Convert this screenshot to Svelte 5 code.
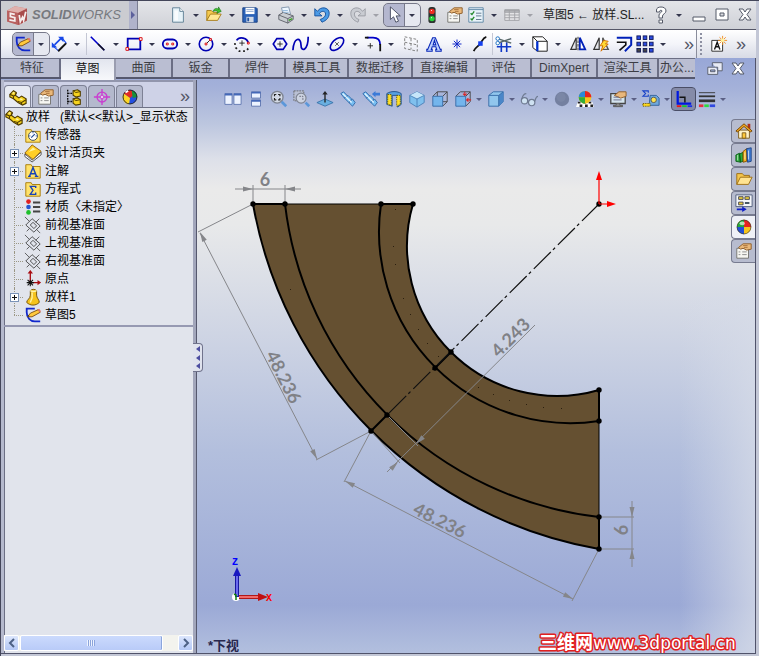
<script>
  const ICONS = {
    logo: `<path d="M1 6L8 2l11 2v11l-7 4-11-3z" fill="#c97b78"/><path d="M1 6l10 2v11L1 16z" fill="#b8605f"/><path d="M11 8l8-4v11l-8 4z" fill="#a84c4c"/><path d="M1 6l7-4 11 2-8 4z" fill="#e0b1ad"/><path d="M8 9.500l-4-1v3l4 1v3l-5-1M12 10l1 6 2-4 1 3 2-8" fill="none" stroke="#f6eeee" stroke-width="1.600"/>`,
    new: `<path d="M4 2h8l4 4v12H4z" fill="#e6f2f8" stroke="#5b7d92"/><path d="M12 2v4h4" fill="#fff" stroke="#5b7d92"/><path d="M6 5h4v11H6z" fill="#fff" opacity=".7"/>`,
    open: `<path d="M2 16V5h5l2 2h5v3H6z" fill="#f5c94e" stroke="#a67a18"/><path d="M2 16l4-7h12l-4 7z" fill="#ffe793" stroke="#a67a18"/><path d="M9 6c1-4 5-4 6-2V1l3 5-5 2 1-2c-1-1-3-1-5 0z" fill="#3ec22f" stroke="#187a14" stroke-width=".7"/>`,
    save: `<path d="M2 2h15l1 1v15H2z" fill="#2a62b8" stroke="#173e80"/><path d="M5 2h10v7H5z" fill="#fff"/><path d="M6 4h8M6 6h8" stroke="#8aa5cf"/><path d="M6 12h8v6H6z" fill="#cfd8e6"/><path d="M7 13h2v4H7z" fill="#24539c"/>`,
    print: `<path d="M5 2l8-1 2 8-8 1z" fill="#eef7ff" stroke="#7f93aa"/><path d="M2 10l5-3 11 4v4l-6 4-10-4z" fill="#c9cdd2" stroke="#5c6068"/><path d="M2 10l10 4v5M12 14l6-3" fill="none" stroke="#5c6068"/><path d="M6 5h6M7 7h6" stroke="#8fb5da"/><path d="M13 16l4-2" stroke="#37a020" stroke-width="1.500"/>`,
    undo: `<path d="M2 3v8h8L7 8.500C9 5 14 5 14 9c0 3-3 5-6 6l2 3c5-2 8-5 8-10C18 1 8 0 5 6z" fill="#4b9be6" stroke="#14509c"/>`,
    redo: `<path d="M18 3v8h-8l3-2.500C11 5 6 5 6 9c0 3 2 5 5 6l-1 3C5 16 2 13 2 8 2 1 12 0 15 6z" fill="#c9ccd2" stroke="#989ba3"/>`,
    select: `<path d="M6 1v14l3.500-3 2.500 6 3-1.200-2.600-5.800H17z" fill="#fff" stroke="#454b5e"/>`,
    traffic: `<rect x="6" y="1" width="8" height="18" rx="3" fill="#2e3330"/><circle cx="10" cy="6" r="3" fill="#f02c22"/><circle cx="10" cy="14" r="3" fill="#25d43a"/><path d="M9 5h1M9 13h1" stroke="#fff"/>`,
    props: `<path d="M2 7h13v11H2z" fill="#f6f6f2" stroke="#70706c"/><path d="M4 11h2M8 11h5M4 14h2M8 14h5" stroke="#888"/><path d="M4 6l5-4h9v6l-5 1-4-2-3 1z" fill="#e9b87a" stroke="#8c5a26"/><path d="M9 4h5M10 6h4" stroke="#a9713a"/>`,
    options: `<path d="M2 2h16v16H2z" fill="#e9f3fa" stroke="#5a84a4"/><path d="M2 4h16" stroke="#5a84a4"/><path d="M4 8l1.500 1.500L8 6M4 14l1.500 1.500L8 12" fill="none" stroke="#258a2e" stroke-width="1.500"/><path d="M10 8h6M10 11h6M10 15h6" stroke="#587288"/>`,
    table: `<path d="M2 4h16v12H2z" fill="#e4e4e6" stroke="#a0a1a6"/><path d="M2 5h16v2H2zM2 10h16M2 13h16M7 5v11M13 5v11" fill="#b5b6ba" stroke="#a0a1a6"/>`,
    help: `<path d="M5.500 7V5c0-2 2-3 4.500-3s5 1 5 4c0 2.500-3.500 3-3.500 5v2H8V10c0-2 3-2.500 3-4 0-1-2-1-2.300 0V7zM8 15h3.500v3H8z" fill="#fff" stroke="#555a68"/>`,
    min: `<path d="M4 12h12v4H4z" fill="#fff" stroke="#555a68"/>`,
    max: `<path d="M4 4h12v11H4zM8 8h4v3H8z" fill="#fff" fill-rule="evenodd" stroke="#555a68"/>`,
    close: `<path d="M4 4h4l2 3 2-3h4l-4 5.500L16 15h-4l-2-3-2 3H4l4-5.500z" fill="#fff" stroke="#555a68"/>`,
    restore: `<path d="M7 3h11v9h-5M7 3v4M2 8h11v8H2zM5 11h5v2H5z" fill="#e8ebf5" fill-rule="evenodd" stroke="#555a68"/>`,
    sketch: `<path d="M12 3H3v4c0 6 4 10 9 10h6" fill="none" stroke="#1128cc" stroke-width="2"/><path d="M4 12l3-4 9-4 2 3-9 5z" fill="#ffc93c" stroke="#7a4b0c"/><path d="M15 4l2-1 2 3-2 1z" fill="#e2766a"/><path d="M4 12l1-2 1 1.500z" fill="#222"/>`,
    dim: `<path d="M9 18L18 9" stroke="#111" stroke-width="2.200"/><path d="M5 11l7-7" stroke="#1747e8" stroke-width="1.800"/><path d="M2 14V8l6 6zM9 2h6v6z" fill="#1747e8"/><path d="M4 13l5 4M14 4l4 5" stroke="#1747e8" stroke-width="1.200"/>`,
    line: `<path d="M2 2l15 15" stroke="#0000c8" stroke-width="1.800"/><path d="M10 10l7 7" stroke="#111" stroke-width="1.600"/>`,
    rect: `<path d="M3 4h14v12H3z" fill="none" stroke="#0000b4" stroke-width="2"/><path d="M16 3h3v3h-3zM1 14h3v3H1z" fill="#fff" stroke="#d00"/>`,
    slot: `<rect x="2" y="5" width="16" height="10" rx="5" fill="none" stroke="#0000b4" stroke-width="2"/><path d="M6 9h2v2H6zM12 9h2v2h-2z" fill="#fff" stroke="#d00"/>`,
    circle: `<circle cx="10" cy="10" r="7.500" fill="none" stroke="#0000b4" stroke-width="1.800"/><path d="M10 10l5-5" stroke="#111"/><path d="M9 9h2v2H9zM14 4h2v2h-2z" fill="#fff" stroke="#d00"/>`,
    arc: `<path d="M4 6c3-5 12-3 13 3" fill="none" stroke="#0000b4" stroke-width="2"/><path d="M2 9l1 5 4 4h7l4-4" fill="none" stroke="#222" stroke-width="2" stroke-dasharray="2 3"/><path d="M10 6v6M7 9h6" stroke="#222"/><path d="M16 8h2v2h-2z" fill="#fff" stroke="#d00"/>`,
    polygon: `<path d="M6.500 4h7l4 6-4 6h-7l-4-6z" fill="none" stroke="#0000b4" stroke-width="1.800"/><path d="M10 7v6M7 10h6" stroke="#222"/>`,
    spline: `<path d="M1 17C2 2 10 2 10 11s8 6 8-9" fill="none" stroke="#0000b4" stroke-width="1.900"/>`,
    ellipse: `<ellipse cx="10" cy="10" rx="9" ry="5" transform="rotate(-42 10 10)" fill="none" stroke="#0000b4" stroke-width="1.800"/><path d="M8 8l4 4M12 8l-4 4" stroke="#222" stroke-width=".8"/>`,
    fillet: `<path d="M3 3h7c5 0 8 3 8 8" fill="none" stroke="#0000c8" stroke-width="2"/><path d="M1 3h4M18 10v8" stroke="#111" stroke-width="2"/><path d="M7 9v6M4 12h6" stroke="#222"/>`,
    plane: `<path d="M3 2l14 3v13L3 15zM3 8l14 3M10 4v12" fill="none" stroke="#777" stroke-dasharray="3 2"/>`,
    texta: `<path d="M8.500 3h3L17 16h1v2h-6v-2h1l-1-3H8l-1 3h1v2H2v-2h1zM9 11h3l-1.500-5z" fill="#bcd0ff" fill-rule="evenodd" stroke="#0a28b8" stroke-width="1.200"/>`,
    point: `<path d="M10 5v10M5 10h10M6.500 6.500l7 7M13.500 6.500l-7 7" stroke="#1228c8" stroke-width="1.100"/>`,
    mid: `<path d="M3 18C5 13 7 14 10 10s3-7 7-8" fill="none" stroke="#111" stroke-width="2"/><path d="M8 7h5v5H8z" fill="#1540f0"/>`,
    trim: `<path d="M2 13h16M7 8v11M13 8v11" stroke="#1038c8" stroke-width="1.800"/><path d="M3 4l15 5M3 9l15-5" stroke="#566" stroke-width="1.600"/><circle cx="3" cy="4" r="2" fill="#fff" stroke="#156cc0"/><circle cx="3" cy="9" r="2" fill="#fff" stroke="#156cc0"/>`,
    convert: `<path d="M2 2h11l5 5v11H7l-5-4zM7 18V7h11M2 2l5 5" fill="#fff" stroke="#111"/><path d="M7 7v11" stroke="#0030d0" stroke-width="2.500"/>`,
    mirror: `<path d="M8 3v13H2z" fill="#e5e7ec" stroke="#333" stroke-width="1.300"/><path d="M12 3v13h6z" fill="#fff" stroke="#0020b8" stroke-width="2"/><path d="M10 2v16" stroke="#222" stroke-dasharray="3 1"/>`,
    dynmirror: `<path d="M8 3v13H2z" fill="#e5e7ec" stroke="#333" stroke-width="1.300"/><path d="M12 3v13h6z" fill="#fff" stroke="#555" stroke-width="1.600"/><path d="M13 6l5 1-3 3h3l-8 8 2-6H9z" fill="#ffd935" stroke="#d36c00"/>`,
    offset: `<path d="M2 3h16v8l-7 7" fill="none" stroke="#0020b8" stroke-width="2.200"/><path d="M2 8h10v3l-7 6" fill="none" stroke="#111" stroke-width="1.800"/>`,
    pattern: [3, 10, 17].map((y) => [3, 10, 17].map((x) => `<rect x="${x - 2}" y="${y - 2}" width="4" height="4" fill="${y > 10 && x < 17 ? '#444' : '#2a4ae0'}" stroke="#101858"/>`).join('')).join(''),
    note: `<path d="M2 6h12v12H2z" fill="#fff" stroke="#222"/><path d="M5 16l3-8 3 8M6 13h4" fill="none" stroke="#111" stroke-width="1.500"/><path d="M14 1v10M9 6h10M10.500 2.500l7 7M17.500 2.500l-7 7" stroke="#f08a1c"/><circle cx="14" cy="6" r="2" fill="#fff3a0"/>`,
    part: `<path d="M1 7l4-4 3 2-1 3 4 3 3-2 5 3v5l-4 2-5-3-5-4-4-2z" fill="#f5d21c" stroke="#4f3b00" stroke-width="1.300"/><path d="M1 7l4 2 2-1M5 9v3M10 15l4 1 5-3M14 16v3M8 5v2" fill="none" stroke="#4f3b00" stroke-width="1.200"/><path d="M4 6l2-1M12 12l3 1" stroke="#fff7a8" stroke-width="1.500" fill="none"/>`,
    config: `<path d="M3 2v16M3 6h5M3 15h5" stroke="#111" stroke-width="1.500" stroke-dasharray="2 1"/><path d="M9 3l5-1 3 2v5l-5 1-3-2zM9 12l5-1 3 2v5l-5 1-3-2z" fill="#f7d31d" stroke="#4f3d00" stroke-width="1.200"/><path d="M9 3l3 2 5-1M9 12l3 2 5-1" fill="none" stroke="#4f3d00"/>`,
    target: `<circle cx="10" cy="10" r="5.500" fill="none" stroke="#c93ed0" stroke-width="1.500"/><path d="M10 1v18M1 10h18" stroke="#c93ed0" stroke-width="1.500"/><circle cx="10" cy="10" r="2" fill="#e9c6f2" stroke="#c93ed0"/>`,
    ball: `<circle cx="10" cy="10" r="8" fill="#f7c51c"/><path d="M10 10V2a8 8 0 0 1 8 8z" fill="#e52320"/><path d="M10 10V2a8 8 0 0 0-8 8z" fill="#24a83a"/><path d="M10 10H2a8 8 0 0 0 8 8z" fill="#2350d8"/><circle cx="10" cy="10" r="7.700" fill="none" stroke="#333" stroke-width=".7"/><ellipse cx="8" cy="6" rx="3" ry="2" fill="#fff" opacity=".65"/>`,
    disp: `<circle cx="10" cy="10" r="8" fill="#2450e0"/><path d="M3 6c4-5 9-5 13 0L10 11z" fill="#e22a22"/><path d="M3 6l7 5-1 7C3 18 0 11 3 6z" fill="#ffd622"/><path d="M12 3c4 0 6 4 6 7l-5 1z" fill="#16913b"/><circle cx="10" cy="10" r="7.700" fill="none" stroke="#222"/><path d="M5 5l3-2" stroke="#fff" stroke-width="2"/>`,
    sensor: `<path d="M2 4h6l1 2h9v12H2z" fill="#ffe26a" stroke="#a87900"/><circle cx="10" cy="11" r="5" fill="#fff" stroke="#345"/><path d="M8 13l4-4M10 7v1M6 11h1M13 11h1" stroke="#234f9a" stroke-width="1.300"/>`,
    binder: `<path d="M1 11l8 7 10-9v3l-10 8-8-6z" fill="#fff" stroke="#444"/><path d="M1 10l8-9 10 7-9 9z" fill="#ffce26" stroke="#915f00"/><path d="M5 9l5-5 3 2z" fill="#fff49b"/>`,
    annot: `<path d="M2 3h6l1 2h9v13H2z" fill="#ffe26a" stroke="#a87900"/><path d="M6 16l4-10 4 10M7.500 13h5M4.500 16h3M12 16h4" fill="none" stroke="#1742b8" stroke-width="1.600"/>`,
    equation: `<path d="M2 3h6l1 2h9v13H2z" fill="#ffe26a" stroke="#a87900"/><path d="M13 9V7H7l3 4.500L7 16h6v-2" fill="none" stroke="#1742b8" stroke-width="1.500"/>`,
    material: `<circle cx="5" cy="4" r="2.600" fill="#e02020"/><circle cx="5" cy="10" r="2.600" fill="#2456d0"/><circle cx="5" cy="16" r="2.600" fill="#1fc02c"/><path d="M10 5h8M10 10h8M10 15h8" stroke="#444" stroke-width="2"/>`,
    refplane: `<path d="M2 10l7-7 9 8-7 7zM7 10l3-3 4 4-3 3z" fill="none" stroke="#333" stroke-width=".9"/><path d="M1 1l5 5M14 15l4 4M17 3l-4 4M3 17l3-3" fill="none" stroke="#444" stroke-width=".9"/>`,
    originT: `<path d="M7 3v11h10" fill="none" stroke="#a80c12" stroke-width="1.500"/><path d="M7 0l3 4H4zM19 14l-4-3v6z" fill="#a80c12"/><path d="M4 11l6 6M10 11l-6 6M7 11v7M3 14h8" stroke="#111" stroke-width="1.200"/>`,
    loft: `<path d="M7 3c2-2 5-2 7 0v5c0 3 3 5 3 8-4 4-10 4-14 0 0-3 4-4 4-8z" fill="#f5c31c" stroke="#6f4c00"/><path d="M7 3c2 1 5 1 7 0M9 5v6l-2 5" fill="none" stroke="#fff4a6" stroke-width="1.500"/>`,
    tileh: `<path d="M1 4h8v12H1zM11 4h8v12h-8z" fill="#edf3ff" stroke="#5c74ae"/><path d="M1 5h8M11 5h8" stroke="#4468b8" stroke-width="2"/>`,
    tilev: `<path d="M5 2h10v7H5zM5 11h10v7H5z" fill="#edf3ff" stroke="#5c74ae"/><path d="M5 3h10M5 12h10" stroke="#4468b8" stroke-width="2"/>`,
    zoomfit: `<circle cx="8" cy="8" r="6.500" fill="#d4dae6" stroke="#7f8592" stroke-width="1.500"/><path d="M5 7V5h2M9 5h2v2M11 9v2H9M7 11H5V9" fill="none" stroke="#222" stroke-width="1.300"/><path d="M13 13l5 5" stroke="#5b97da" stroke-width="3"/>`,
    zoomarea: `<path d="M1 1h11v11H1z" fill="#b9c0d4" stroke="#666" stroke-dasharray="2 1"/><circle cx="9" cy="9" r="5.500" fill="#cdd4e2" stroke="#7f8592" stroke-width="1.300"/><path d="M7 7h4v4" fill="none" stroke="#667" stroke-dasharray="2 1"/><path d="M14 14l4 4" stroke="#5b97da" stroke-width="3"/>`,
    normal: `<path d="M1 14l9-4 9 4-9 4z" fill="#69afe0" stroke="#3a74ab"/><path d="M10 14V4" stroke="#222" stroke-width="1.500"/><path d="M10 1l3 4H7z" fill="#222"/>`,
    scope: `<path d="M2 4l3-2 4 4-3 3zM6 9l4-3 4 4-3 4zM11 14l4-4 3 4-3 4z" fill="#78bff2" stroke="#2f68a8"/><path d="M4 4l10 10" stroke="#e2f4ff" stroke-width="1.500"/>`,
    prev: `<path d="M1 4l3-2 4 4-3 3zM5 9l4-3 4 4-3 4zM10 14l4-4 3 4-3 4z" fill="#78bff2" stroke="#2f68a8"/><path d="M3 4l10 10" stroke="#e2f4ff" stroke-width="1.500"/><path d="M20 3h-5V1l-4 3.500L15 8V6h5z" fill="#3b7bd8"/>`,
    section: `<path d="M2 4c4-3 12-3 16 0v12l-4 3V6H8v12l-6-2z" fill="#579fdf" stroke="#1f4f8a"/><path d="M3 5h4v12l-4-1zM13 6h4v10l-4 2z" fill="#ffe027" stroke="#6a5800" stroke-dasharray="1.500 1"/>`,
    iso: `<path d="M2 6l8-4 8 4v8l-8 5-8-5z" fill="#7fc0ee" stroke="#4a80b8"/><path d="M2 6l8 4 8-4-8-4z" fill="#c6e6fa"/><path d="M2 6l8 4 8-4M10 10v9" fill="none" stroke="#4a80b8"/>`,
    cube: `<path d="M7 2h11v11l-5 5M18 2l-5 5M7 2L2 7M7 2v5M18 13h-5" fill="none" stroke="#444"/><path d="M2 7h11v11H2z" fill="#74b5ec" stroke="#346aa6"/>`,
    cubered: `<path d="M7 2h11v11l-5 5M18 2l-5 5M7 2L2 7" fill="none" stroke="#444"/><path d="M2 7h11v11H2z" fill="#74b5ec" stroke="#346aa6"/><path d="M12 2v4M19 11h-5M10 4l2 2 2-2M16 9l-2 2 2 2" fill="none" stroke="#d82828" stroke-width="1.200"/>`,
    shaded: `<path d="M2 6l5-4h11v11l-5 5H2z" fill="#91c6ed" stroke="#346aa6"/><path d="M13 6l5-4v11l-5 5z" fill="#4a86c8"/><path d="M2 6h11v12M13 6l5-4" fill="none" stroke="#346aa6"/>`,
    glasses: `<circle cx="5" cy="12" r="3.500" fill="#cfe2f2" stroke="#6f7b92" stroke-width="1.300"/><circle cx="13" cy="14" r="3.500" fill="#cfe2f2" stroke="#6f7b92" stroke-width="1.300"/><path d="M2 10c1-4 3-6 5-6M16 13c2-3 1-6 4-6M8 12l2 1" fill="none" stroke="#6f7b92" stroke-width="1.300"/>`,
    sphere: `<circle cx="10" cy="10" r="8" fill="#7480a0"/><circle cx="9" cy="8" r="5" fill="#7b87a6"/>`,
    scene: `<path d="M2 13h16l2 6H0z" fill="#fff"/><path d="M2 13h3v2H2zM8 13h3v2H8zM14 13h3v2h-3zM4 16h3v3H4zM10 16h3v3h-3zM16 16h3v3h-3z" fill="#222"/><circle cx="10" cy="8" r="7" fill="#f4c61f"/><path d="M10 8V1a7 7 0 0 1 7 7z" fill="#e52320"/><path d="M10 8V1a7 7 0 0 0-7 7z" fill="#2a88d8"/><path d="M10 8H3a7 7 0 0 0 7 7z" fill="#33ad38"/>`,
    screen: `<path d="M2 4h16v11H2z" fill="#d4e4ee" stroke="#444" stroke-width="1.400"/><path d="M8 15v2H5v1.500h10V17h-3v-2" fill="#888" stroke="#555"/><path d="M6 6l5-4h8v5l-6 2z" fill="#e8b77c" stroke="#8c5a26"/><path d="M5 8h6M5 11h9" stroke="#668"/>`,
    measure: `<path d="M7 3V1H1l3 3-3 3h6V5" fill="none" stroke="#1742c8" stroke-width="1.200"/><path d="M9 6h7l3 3v8H8z" fill="#6fa8dc" stroke="#2f5f9a"/><circle cx="13" cy="11" r="3" fill="#ffe34d" stroke="#555"/><path d="M1 15h8v3H1z" fill="#ffd91c" stroke="#6b5800" stroke-dasharray="1.500 1"/>`,
    axis: `<path d="M3 1v14h15" fill="none" stroke="#0018e0" stroke-width="2.500"/><path d="M5 8h6v6" fill="none" stroke="#111" stroke-width="1.600"/><path d="M2 17h5v2H2z" fill="#e81818"/><path d="M8 17h5v2H8z" fill="#14c828"/><path d="M14 17h5v2h-5z" fill="#1830e8"/>`,
    lines: `<path d="M1 3h18" stroke="#333"/><path d="M1 7h18" stroke="#333" stroke-width="2"/><path d="M1 12h18" stroke="#333" stroke-width="3"/><path d="M1 16h5v3H1z" fill="#e83040"/><path d="M7 16h5v3H7z" fill="#30d840"/><path d="M13 16h6v3h-6z" fill="#3048e0"/>`,
    home: `<path d="M14 2h3v6h-3z" fill="#b03018"/><path d="M4 9h12v9H4z" fill="#fff3c8" stroke="#7c5a18"/><path d="M8 12h4v6H8z" fill="#ffc83a" stroke="#7c5a18"/><path d="M1 10l9-8 9 8-2 1-7-6-7 6z" fill="#f3a620" stroke="#6f4300"/>`,
    library: `<path d="M1 10l4-2 1 10-5-1zM5 9l4-2v10l-3 1z" fill="#2eac3c" stroke="#0c5c18"/><path d="M9 6l4-3v14l-4 1z" fill="#f6b31e" stroke="#805000"/><path d="M13 3l5-1v15l-4 1z" fill="#427fd8" stroke="#1b4284"/><path d="M3 10v6M11 7v8M15 5v10" stroke="#fff" opacity=".7"/>`,
    folder: `<path d="M2 16V4h6l2 2h6v3" fill="#f5c64c" stroke="#9a6a10"/><path d="M2 16l4-8h13l-4 8z" fill="#ffe391" stroke="#9a6a10"/>`,
    palette: `<path d="M1 1h18v13H1z" fill="#f4f6fa" stroke="#4b5878"/><path d="M4 3h5v3H4zM11 3h5v3h-5zM4 9h5v3H4z" fill="#e9cc3b" stroke="#445"/><path d="M11 10h5" stroke="#345" stroke-width="2"/><path d="M2 16h6v-2l5 3-5 3v-2H2z" fill="#1020c8"/>`,
  };
  // [icon, label, has a drop-down, state]
  const standard = [
    ['new', '新建', 1], ['open', '打开', 1], ['save', '保存', 1], ['print', '打印', 1],
    ['undo', '撤消', 1], ['redo', '重做', 1, 'dim'], ['select', '选择', 1, 'on'],
    ['traffic', '重建模型', 0], ['props', '文件属性', 0], ['options', '选项', 1], ['table', '表格', 1, 'dim'],
  ];
  const sketchTools = [
    ['sketch', '草图绘制', 1, 'on'], ['dim', '智能尺寸', 1], ['|'],
    ['line', '直线', 1], ['rect', '矩形', 1], ['slot', '槽口', 1], ['circle', '圆', 1], ['arc', '圆弧', 1],
    ['polygon', '多边形', 0], ['spline', '样条曲线', 1], ['ellipse', '椭圆', 1], ['fillet', '圆角', 1],
    ['plane', '基准面', 0], ['texta', '文字', 0], ['point', '点', 0], ['mid', '中点', 0], ['|'],
    ['trim', '剪裁', 1], ['convert', '转换实体', 1], ['mirror', '镜向', 0], ['dynmirror', '动态镜向', 0],
    ['offset', '等距实体', 0], ['pattern', '阵列', 1],
  ];
  const viewTools = [
    ['tileh', '横向平铺', 0], ['tilev', '纵向平铺', 0], ['zoomfit', '整屏显示', 0], ['zoomarea', '局部放大', 0],
    ['normal', '正视于', 0], ['scope', '放大', 0], ['prev', '上一视图', 0], ['section', '剖面视图', 0],
    ['iso', '等轴测', 0], ['cube', '前视', 0], ['cubered', '视图定向', 1], ['shaded', '显示样式', 1],
    ['glasses', '隐藏/显示', 1], ['sphere', '外观', 0], ['scene', '布景', 1], ['screen', '视图设定', 1],
    ['measure', '测量', 1], ['axis', '坐标', 0, 'on'], ['lines', '线型', 1],
  ];
  const tabs = [
    ['特征', 56], ['草图', 55], ['曲面', 57], ['钣金', 57], ['焊件', 56], ['模具工具', 63], ['数据迁移', 64],
    ['直接编辑', 64], ['评估', 55], ['DimXpert', 66], ['渲染工具', 61], ['办公...', 36],
  ];
  let active = $state('草图');
  const panelTabs = [['part', '设计树'], ['props', '属性'], ['config', '配置'], ['target', 'DimXpert'], ['disp', '外观']];
  const tree = [
    ['sensor', '传感器', 0], ['binder', '设计活页夹', 1], ['annot', '注解', 1], ['equation', '方程式', 0],
    ['material', '材质〈未指定〉', 0], ['refplane', '前视基准面', 0], ['refplane', '上视基准面', 0],
    ['refplane', '右视基准面', 0], ['originT', '原点', 0], ['loft', '放样1', 1], ['sketch', '草图5', 0],
  ];
  const taskPane = [['home', '资源'], ['library', '设计库'], ['folder', '文件探索器'], ['palette', '视图调色板'], ['ball', '外观'], ['props', '自定义属性']];
  const nodes = [[253, 204], [285, 204], [381, 204], [413, 204], [451, 352], [435, 368], [387, 415], [371, 431], [599, 390], [599, 421], [599, 517], [599, 549], [599, 204]];
  const specks = [[395, 209], [393, 246], [395, 264], [403, 298], [410, 314], [418, 329], [427, 343], [290, 289], [438, 356], [478, 387], [493, 394], [509, 400], [526, 404], [543, 407], [561, 408]];
  // [tip x, tip y, angle in degrees]
  const arrows = [[253, 189, 0], [285, 189, 180], [200, 232, 243], [317, 459, 63], [345, 481, 207], [573, 599, 27], [632, 517, 90], [632, 549, 270], [416, 444, 135], [398, 462, 315]];
</script>

{#snippet icon(name, size = 20)}
  <svg class="icon" width={size} height={size} viewBox="0 0 20 20" aria-hidden="true">{@html ICONS[name]}</svg>
{/snippet}

{#snippet tools(list, size = 20)}
  {#each list as [name, label, drop, mode]}
    {#if name === '|'}
      <i class="sep"></i>
    {:else}
      <span class={['tool', mode, { drop }]}>
        <button class="main" aria-label={label}>{@render icon(name, size)}</button>
        {#if drop}<button class="caret" aria-label="{label}选项"></button>{/if}
      </span>
    {/if}
  {/each}
{/snippet}

<div class="app">
  <header class="title">
    <div class="brand">
      {@render icon('logo', 22)}
      <span class="word"><b>SOLID</b>WORKS</span>
      <button class="flyout" aria-label="菜单"></button>
    </div>
    <div class="bar">{@render tools(standard, 18)}</div>
    <h1>草图5 ← 放样.SL...</h1>
    <div class="bar win">
      {@render tools([['help', '帮助', 1], ['min', '最小化', 0], ['max', '最大化', 0], ['close', '关闭', 0]])}
    </div>
  </header>

  <div class="commands">
    <div class="bar">{@render tools(sketchTools, 18)}</div>
    <button class="more">»</button>
    <div class="extra">
      <i class="grip"></i>
      <button class="main" aria-label="注释">{@render icon('note', 18)}</button>
      <button class="more">»</button>
    </div>
  </div>

  <div class="work">
    <div class="tabrow">
      <nav class="tabs">
        {#each tabs as [name, w]}
          <button class={{ active: active === name }} style:flex-basis="{w}px" onclick={() => (active = name)}>{name}</button>
        {/each}
      </nav>
      <div class="doc">
        <button class="main" aria-label="还原文档">{@render icon('restore', 18)}</button>
        <button class="main" aria-label="关闭文档">{@render icon('close')}</button>
      </div>
    </div>

    <div class="body">
      <aside>
        <div class="ptabs">
          {#each panelTabs as [name, label], i}
            <button class={{ active: i === 0 }} aria-label={label}>{@render icon(name, 18)}</button>
          {/each}
          <button class="more">»</button>
        </div>
        <div class="tree">
          <div class="root">{@render icon('part', 18)}<span>放样{'   '}(默认&lt;&lt;默认&gt;_显示状态</span></div>
          <ul>
            {#each tree as [name, label, open]}
              <li>
                <span class="twig">{#if open}<button class="plus" aria-label="展开{label}"></button>{/if}</span>
                {@render icon(name, 18)}<span>{label}</span>
              </li>
            {/each}
          </ul>
        </div>
        <div class="scroll">
          <button class="arrow" aria-label="向左滚动"><svg width="8" height="10" viewBox="0 0 8 10"><path d="M6 1L2 5l4 4" /></svg></button>
          <div class="track"><div class="thumb"><i></i></div></div>
          <button class="arrow" aria-label="向右滚动"><svg width="8" height="10" viewBox="0 0 8 10"><path d="M2 1l4 4-4 4" /></svg></button>
        </div>
        <button class="handle" aria-label="折叠面板"><i></i><i></i><i></i></button>
      </aside>

      <main>
        <svg class="scene" viewBox="197 80 558 573">
          <path class="face" d="M253 204H413A150 150 0 0 0 599 390V549A426 426 0 0 1 253 204Z" />
          <g class="edge">
            <path d="M253 204A426 426 0 0 0 599 549M285 204A357 357 0 0 0 599 517M381 204A191.500 191.500 0 0 0 599 421M413 204A150 150 0 0 0 599 390" />
            <path d="M253 204H285M381 204H413M599 390V421M599 517V549M451 352L435 368M387 415L371 431" />
            <path class="thin" d="M285 204H381M599 421V517" />
          </g>
          {#each specks as [x, y]}<rect {x} {y} width="1" height="1" fill="#2c2010" />{/each}
          <path class="axisline" d="M599 204L387 415" />
          <g class="dims">
            <path d="M235 189H301M253 185V204M285 185V204M253 204L198 232M200 233L317 459M371 431L316 460M371 431L344 482M345 481L573 599M599 549L572 601M601 517H634M601 549H634M632 501V567M535 325L387 472M387 415L418 446M371 431L400 463" />
            {#each arrows as [x, y, a]}<path class="head" d="M0 0L-10 2.500V-2.500Z" transform="translate({x} {y}) rotate({a})" />{/each}
            <text transform="translate(265 186)">6</text>
            <text transform="translate(278 380) rotate(63)">48.236</text>
            <text transform="translate(437 526) rotate(27)">48.236</text>
            <text transform="translate(515 342) rotate(-45)">4.243</text>
            <text transform="translate(628 530) rotate(-90)">6</text>
          </g>
          {#each nodes as [x, y]}<circle cx={x} cy={y} r="2.700" />{/each}
          <path d="M599 204V178M599 204H609" stroke="red" stroke-width="1.200" />
          <path d="M599 171l3 9h-6zM616 204l-9-3v6z" fill="red" />

          <circle cx="236" cy="597" r="4" fill="#fff" />
          <path d="M239 597H260" stroke="#b01818" stroke-width="4" /><path d="M239 597H260" stroke="#ee6a6a" stroke-width="2" />
          <path d="M268 597l-10-4v8z" fill="#c01010" />
          <path d="M237 597V575" stroke="#1818a0" stroke-width="4" /><path d="M237 596V575" stroke="#6a6aee" stroke-width="2" />
          <path d="M237 567l4 9h-8z" fill="#1818c0" /><path d="M234 594l2 1v5" stroke="#108010" stroke-width="1.500" fill="none" />
          <text class="ax" x="232" y="565" fill="#00f">Z</text>
          <text class="ax" x="266" y="601" fill="red">X</text>
          <text class="view" x="208" y="650">*下视</text>
          <text class="mark" x="539" y="649"><tspan class="cn">三维网</tspan>www.3dportal.cn</text>
        </svg>
        <div class="bar hud">{@render tools(viewTools, 18)}</div>
        <div class="pane">
          {#each taskPane as [name, label], i}
            <button class={{ active: i === 4 }} aria-label={label}>{@render icon(name, 18)}</button>
          {/each}
        </div>
      </main>
    </div>
  </div>
</div>

<style>
  :global(body) { margin: 0; }
  .app {
    box-sizing: border-box;
    min-height: 100vh;
    display: flex;
    flex-direction: column;
    background: #c3c7d6;
    border-top: 1px solid #44465a;
    border-left: 1px solid #44465a;
    padding: 0 3px 2px 0;
    font: 12px/18px "Liberation Sans", "Noto Sans CJK SC", sans-serif;
    color: #111;
  }
  button { all: unset; box-sizing: border-box; cursor: default; }
  .icon { display: block; flex: none; overflow: visible; }
  .bar { display: flex; align-items: center; }
  .tool { display: flex; flex: none; align-items: center; height: 22px; box-sizing: border-box; }
  .main { width: 23px; height: 22px; display: grid; place-items: center; }
  .drop .main { width: 20px; }
  .caret { width: 16px; height: 22px; display: grid; place-items: center; }
  .caret::before { content: ""; border: 3px solid transparent; border-top: 3px solid #33354c; border-bottom: 0; }
  .dim .caret::before { border-top-color: #a0a1a8; }
  .tool.on { outline: 1px solid #77798a; border-radius: 4px; background: linear-gradient(90deg, #b4b7cf 20px, #77798a 20px, #77798a 21px, #e6e8f0 21px); }
  .sep { width: 1px; height: 22px; margin: 0 1px; background: #c4c7d4; }
  .more { font-size: 18px; color: #555866; text-align: center; }

  .title { display: flex; align-items: center; height: 28px; background: linear-gradient(#e4e5e9, #cfd1d7); border-bottom: 1px solid #555768; }
  .brand { display: flex; align-items: center; align-self: stretch; width: 137px; margin-right: 30px; padding-left: 5px; box-sizing: border-box; background: #cbccd1; }
  .word { margin-left: 4px; font-size: 13px; font-style: italic; color: #77797f; }
  .flyout { margin-left: auto; width: 9px; align-self: stretch; display: grid; place-items: center; background: #b0b3cb; border-right: 1px solid #7a7d92; }
  .flyout::before { content: ""; border: 4px solid transparent; border-left-color: #5c609c; border-right: 0; }
  h1 { flex: 1; min-width: 0; margin: 0 0 0 5px; font: inherit; white-space: nowrap; overflow: hidden; color: #222; }

  .commands { display: flex; align-items: center; height: 28px; padding-left: 12px; background: linear-gradient(#fff, #f4f5fa 50%, #dcdfec); }
  .commands > .more { margin-left: auto; width: 14px; }
  .extra { display: flex; align-items: center; justify-content: space-between; align-self: stretch; width: 60px; padding-right: 10px; box-sizing: border-box; border-left: 1px solid #8a8d9c; background: linear-gradient(#fff, #d8dbe6); }
  .grip { width: 0; height: 22px; margin-left: 3px; border-left: 2px dotted #8d90a2; }

  .work {
    flex: 1;
    display: flex;
    flex-direction: column;
    border-right: 1px solid #50536a;
    border-bottom: 1px solid #50536a;
    background:
      linear-gradient(90deg, transparent 90%, rgba(215, 220, 232, .75)) 0 100% / 100% 60% no-repeat,
      linear-gradient(#98a7d7, #a4b1d9 5%, #bcc6df 11%, #dde0e9 17%, #eaeaea 22%, #e8e9ea 28%, #cfd5e4 46%, #b3bfdd 66%, #a8b5da 78%, #9ba9d6 92%, #b2bfde);
  }
  .tabrow { display: flex; height: 22px; }
  .tabs { flex: 0 0 694px; display: flex; height: 21px; padding-left: 4px; box-sizing: border-box; background: #b9bdd2; border-bottom: 2px solid #55586e; border-top: 1px solid #6b6e84; }
  .tabs button { flex: 0 1 auto; height: 18px; line-height: 19px; text-align: center; white-space: nowrap; border-right: 2px solid #6b6e84; color: #3c3d44; background: #babed2; }
  .tabs button:last-child { border-right: 0; }
  .tabs .active { height: 21px; background: linear-gradient(#e2e5ee, #f7f8fb); border-color: #9a9db0; color: #111; }
  .doc { flex: 1; display: flex; justify-content: flex-end; align-items: end; padding-right: 6px; }

  .body { flex: 1; display: flex; }
  aside { position: relative; flex: 0 0 195px; box-sizing: border-box; display: flex; flex-direction: column; border-left: 3px solid #b5b9cd; border-right: 3px solid #a2a6bb; background: #e1e4ec; box-shadow: inset 1px 0 #6c6f84; }
  .ptabs { display: flex; align-items: end; height: 28px; gap: 1px; background: #ced2e7; border-top: 2px solid #9296ad; border-bottom: 1px solid #6e7286; box-sizing: border-box; }
  .ptabs button { width: 27px; height: 22px; display: grid; place-items: center; border: 1px solid #7d8195; border-bottom: 0; border-radius: 4px 4px 0 0; background: #b4b9cd; }
  .ptabs .active { background: #e8ebf3; }
  .ptabs .more { margin-left: auto; margin-right: 2px; background: none; border: 0; width: 12px; }
  .tree { padding-bottom: 1px; border-bottom: 2px solid #9699b2; color: #000; overflow: hidden; }
  .root, li { display: flex; align-items: center; height: 18px; }
  .root { padding-left: 1px; gap: 3px; }
  .root span, li span { flex: none; white-space: pre; }
  ul { list-style: none; margin: 0; padding: 0 0 0 4px; }
  li { gap: 3px; }
  .twig { position: relative; align-self: stretch; width: 13px; display: flex; align-items: center; }
  .twig::before { content: ""; position: absolute; left: 6px; top: 0; bottom: 0; border-left: 1px dotted #9b9784; }
  .twig::after { content: ""; position: absolute; left: 6px; right: -2px; top: 9px; border-top: 1px dotted #9b9784; }
  li:last-child .twig::before { bottom: 9px; }
  .plus { position: relative; z-index: 1; margin-left: 2px; width: 9px; height: 9px; border: 1px solid #7a93b8; background: linear-gradient(#111, #111) 50% / 5px 1px no-repeat, linear-gradient(#111, #111) 50% / 1px 5px no-repeat, #fff; }
  .scroll { display: flex; height: 16px; margin-top: auto; margin-bottom: 2px; background: #f3f3ee; }
  .arrow { width: 15px; display: grid; place-items: center; border: 1px solid #fff; border-radius: 2px; background: linear-gradient(#dce6fd, #b4c8f6); }
  .arrow path { fill: none; stroke: #4d6185; stroke-width: 2; }
  .track { flex: 1; padding: 0 1px; }
  .thumb { width: 91%; height: 16px; box-sizing: border-box; display: grid; place-items: center; border: 1px solid #fff; border-radius: 2px; background: linear-gradient(#cbdafd, #b9cbf8); box-shadow: inset -1px 0 #8ba6dd; }
  .thumb i { width: 8px; height: 6px; background: repeating-linear-gradient(90deg, #eef3ff 0 1px, #8ca5dc 1px 2px); }
  .handle { position: absolute; z-index: 2; left: 100%; top: 263px; width: 10px; height: 29px; display: flex; flex-direction: column; justify-content: space-evenly; align-items: center; border: 1px solid #70738c; border-left: 0; border-radius: 0 4px 4px 0; background: #dfe2ed; }
  .handle i { border: 3px solid transparent; border-right: 4px solid #4c4da0; border-left: 0; }

  main { position: relative; flex: 1; min-width: 0; border-left: 1px solid #55586e; }
  .scene { position: absolute; inset: 0; width: 100%; height: 100%; }
  .hud { position: absolute; left: 24px; top: 8px; }
  .hud .main, .hud .drop .main { width: 23px; }
  .hud .caret { width: 10px; }
  .hud .caret::before { border-top-color: #5a5f84; }
  .hud .on { background: #858ba8; border-radius: 3px; outline-color: #4a4e66; }
  .pane { position: absolute; right: 0; top: 39px; width: 24px; display: grid; }
  .pane button { height: 24px; display: grid; place-items: center; border: 1px solid #777b90; border-right: 0; border-radius: 4px 0 0 4px; background: #b7bccf; }
  .pane .active { background: #eff1f7; }

  .face { fill: #655031; }
  .edge { fill: none; stroke: #000; stroke-width: 2; }
  .edge .thin { stroke-width: 1; }
  .axisline { stroke: #111; stroke-width: 1.2; fill: none; stroke-dasharray: 24 4 3 3; }
  .dims { fill: none; stroke: #85868a; stroke-width: 1; }
  .dims .head { fill: #85868a; stroke: none; }
  .dims text { fill: #808186; stroke: none; font: 700 18px Lato, sans-serif; text-anchor: middle; }
  .ax { font: bold 10px "Liberation Mono", monospace; }
  .view { font: bold 13px "Liberation Sans", "Noto Sans CJK SC", sans-serif; fill: #28284e; }
  .mark { font: 17px "DejaVu Sans", sans-serif; fill: #fff; stroke: #e02020; stroke-width: 3; stroke-linejoin: round; paint-order: stroke; }
  .cn { font: bold 18px "Noto Sans CJK SC", sans-serif; }
</style>
